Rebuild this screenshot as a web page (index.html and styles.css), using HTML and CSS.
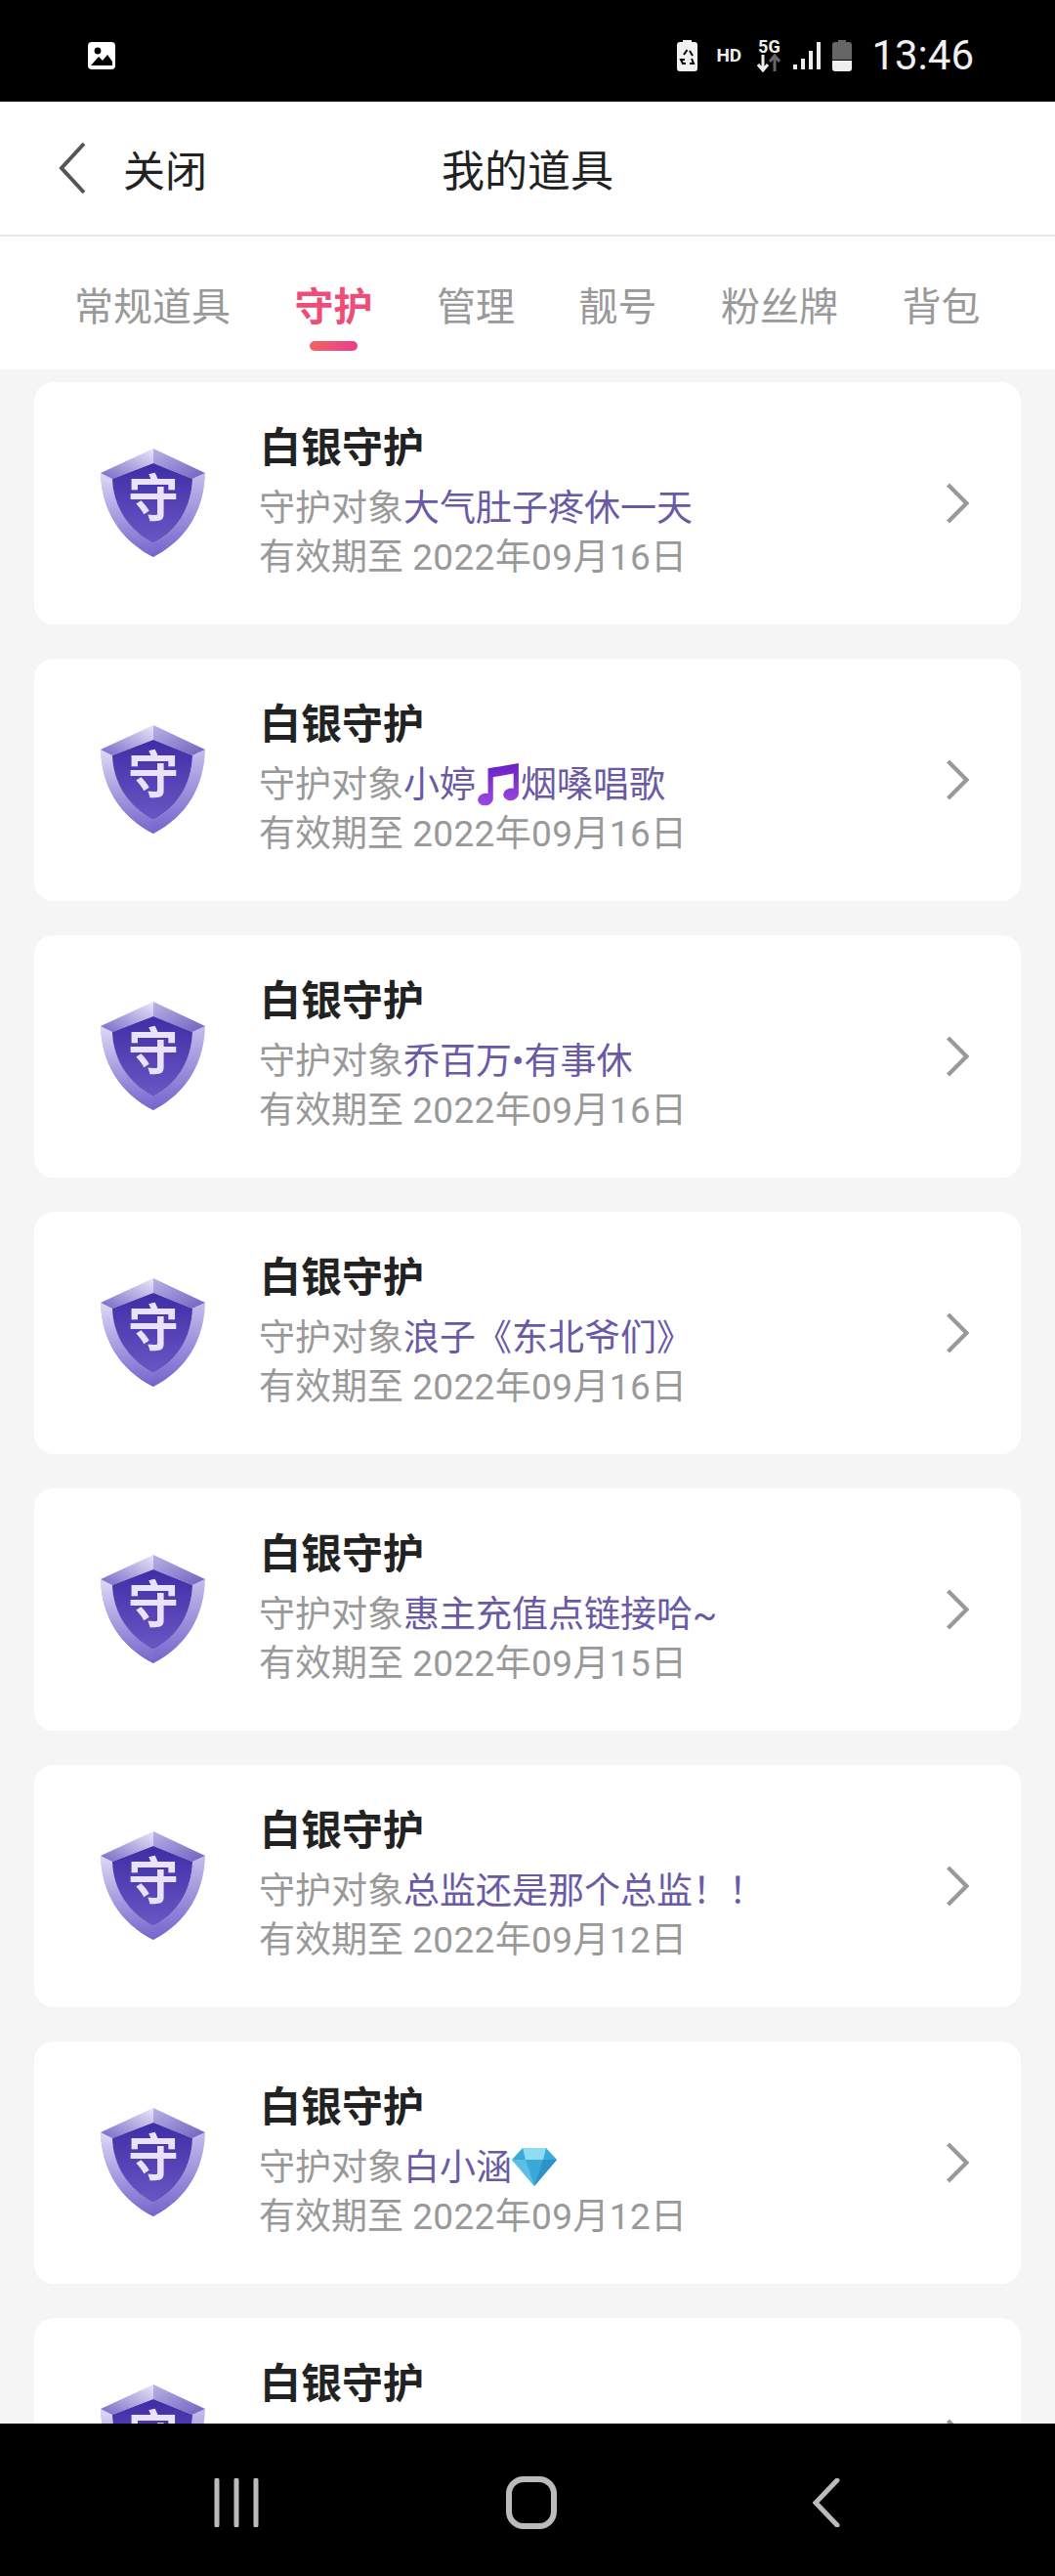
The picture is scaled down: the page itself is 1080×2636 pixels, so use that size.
FILE: index.html
```html
<!DOCTYPE html>
<html lang="zh-CN">
<head>
<meta charset="UTF-8" />
<meta name="viewport" content="width=device-width, initial-scale=1.0" />
<title>我的道具</title>
<link rel="stylesheet" href="styles.css">
</head>
<body>
<svg class="defs" width="0" height="0">
  <defs>
    <linearGradient id="gLeft" x1="0" y1="0" x2="0" y2="1"><stop offset="0" stop-color="#ded9f5"/><stop offset="1" stop-color="#7464cc"/></linearGradient>
    <linearGradient id="gRight" x1="0" y1="0" x2="0" y2="1"><stop offset="0" stop-color="#c4bdec"/><stop offset="1" stop-color="#7464cc"/></linearGradient>
    <linearGradient id="gTopL" x1="1" y1="0" x2="0" y2="1"><stop offset="0" stop-color="#e9e6f9"/><stop offset="1" stop-color="#7568c6"/></linearGradient>
    <linearGradient id="gTopR" x1="0" y1="0" x2="1" y2="1"><stop offset="0" stop-color="#b9b2e6"/><stop offset="1" stop-color="#6f61bf"/></linearGradient>
    <linearGradient id="gCore" x1="0" y1="0" x2="0" y2="1"><stop offset="0" stop-color="#3f2da6"/><stop offset="1" stop-color="#6a57c4"/></linearGradient>
    <symbol id="shield" viewBox="0 0 110 112">
      <path d="M1 25C2 62 20 93 55 111C90 93 107 62 108 25L95 31C94 60 80 84 55 97C30 84 14 60 13 31Z" fill="url(#gRight)"/>
      <path d="M1 25C2 62 20 93 55 111V97C30 84 14 60 13 31Z" fill="url(#gLeft)"/>
      <path d="M55 0L1 25L13 31L55 15Z" fill="url(#gTopL)"/>
      <path d="M55 0L108 25L95 31L55 15Z" fill="url(#gTopR)"/>
      <path d="M55 15L95 31C94 60 80 84 55 97C30 84 14 60 13 31Z" fill="url(#gCore)"/>
      <text x="55" y="70" class="shield-char">守</text>
    </symbol>
    <symbol id="arrow" viewBox="0 0 24 40">
      <path d="M3 2L21 20L3 38" fill="none" stroke="#999" stroke-width="4"/>
    </symbol>
  </defs>
</svg>

<div class="status-bar">
  <svg class="status-img" viewBox="0 0 28 28"><rect width="28" height="28" rx="4" fill="#fff"/><circle cx="10" cy="9" r="3.4" fill="#000"/><path d="M3 24L11 15L15 19L20 13L25 20V24Z" fill="#000"/></svg>
  <div class="status-right">
    <svg class="st-saver" viewBox="0 0 21 32"><path d="M6 0H15V2H18Q21 2 21 5V29Q21 32 18 32H3Q0 32 0 29V5Q0 2 3 2H6Z" fill="#f2f2f2"/><path d="M10.5 10L7 15M8 20H4L6 24H9M13 24H17L15 19M13 11L16 16" fill="none" stroke="#000" stroke-width="2"/></svg>
    <span class="st-hd">HD</span>
    <div class="st-net">
      <span class="st-5g">5G</span>
      <svg viewBox="0 0 24 19" width="24" height="19"><path d="M6 1V16M1 11L6 17L11 11" fill="none" stroke="#eee" stroke-width="3"/><path d="M18 18V3M13 8L18 2L23 8" fill="none" stroke="#666" stroke-width="3"/></svg>
    </div>
    <svg class="st-signal" viewBox="0 0 29 28"><rect x="0" y="23" width="4" height="5" fill="#eee"/><rect x="8" y="17" width="4" height="11" fill="#eee"/><rect x="16" y="9" width="4" height="19" fill="#eee"/><rect x="24" y="0" width="4" height="28" fill="#eee"/></svg>
    <svg class="st-batt" viewBox="0 0 20 32"><path d="M6 0H14V2H17Q20 2 20 5V20H0V5Q0 2 3 2H6Z" fill="#666"/><path d="M0 21H20V29Q20 32 17 32H3Q0 32 0 29Z" fill="#eee"/></svg>
    <span class="st-time">13:46</span>
  </div>
</div>

<div class="header">
  <svg class="back" viewBox="0 0 30 54"><path d="M27 2L4 27L27 52" fill="none" stroke="#555" stroke-width="4"/></svg>
  <span class="close">关闭</span>
  <span class="title">我的道具</span>
</div>

<div class="tabs">
  <div class="tab">常规道具</div>
  <div class="tab active">守护</div>
  <div class="tab">管理</div>
  <div class="tab">靓号</div>
  <div class="tab">粉丝牌</div>
  <div class="tab">背包</div>
</div>

<div class="list">
  <div class="card">
    <svg class="shield"><use href="#shield"/></svg>
    <div class="info">
      <div class="name">白银守护</div>
      <div class="line">守护对象<span class="who">大气肚子疼休一天</span></div>
      <div class="line">有效期至 <span class="date">2022年09月16日</span></div>
    </div>
    <svg class="arrow"><use href="#arrow"/></svg>
  </div>
  <div class="card">
    <svg class="shield"><use href="#shield"/></svg>
    <div class="info">
      <div class="name">白银守护</div>
      <div class="line">守护对象<span class="who">小婷<svg class="emoji" viewBox="0 0 44 44"><defs><linearGradient id="gNote" x1="0" y1="0" x2="0" y2="1"><stop offset="0" stop-color="#6a1fc4"/><stop offset="1" stop-color="#9a4be0"/></linearGradient></defs><path d="M12 7L42 2V32A7.5 6 -10 1 1 37 26.5V12L17 15.500V37A7.500 6 -10 1 1 12 31.500Z" fill="url(#gNote)"/></svg>烟嗓唱歌</span></div>
      <div class="line">有效期至 <span class="date">2022年09月16日</span></div>
    </div>
    <svg class="arrow"><use href="#arrow"/></svg>
  </div>
  <div class="card">
    <svg class="shield"><use href="#shield"/></svg>
    <div class="info">
      <div class="name">白银守护</div>
      <div class="line">守护对象<span class="who">乔百万•有事休</span></div>
      <div class="line">有效期至 <span class="date">2022年09月16日</span></div>
    </div>
    <svg class="arrow"><use href="#arrow"/></svg>
  </div>
  <div class="card">
    <svg class="shield"><use href="#shield"/></svg>
    <div class="info">
      <div class="name">白银守护</div>
      <div class="line">守护对象<span class="who">浪子《东北爷们》</span></div>
      <div class="line">有效期至 <span class="date">2022年09月16日</span></div>
    </div>
    <svg class="arrow"><use href="#arrow"/></svg>
  </div>
  <div class="card">
    <svg class="shield"><use href="#shield"/></svg>
    <div class="info">
      <div class="name">白银守护</div>
      <div class="line">守护对象<span class="who">惠主充值点链接哈~</span></div>
      <div class="line">有效期至 <span class="date">2022年09月15日</span></div>
    </div>
    <svg class="arrow"><use href="#arrow"/></svg>
  </div>
  <div class="card">
    <svg class="shield"><use href="#shield"/></svg>
    <div class="info">
      <div class="name">白银守护</div>
      <div class="line">守护对象<span class="who">总监还是那个总监！！</span></div>
      <div class="line">有效期至 <span class="date">2022年09月12日</span></div>
    </div>
    <svg class="arrow"><use href="#arrow"/></svg>
  </div>
  <div class="card">
    <svg class="shield"><use href="#shield"/></svg>
    <div class="info">
      <div class="name">白银守护</div>
      <div class="line">守护对象<span class="who">白小涵<svg class="emoji gem" viewBox="0 0 46 40"><path d="M11 1H35L46 13L23 40L0 13Z" fill="#3aa9d8"/><path d="M11 1H35L32 13H14Z" fill="#8fdcf5"/><path d="M0 13H14L23 40Z" fill="#5cc0e6"/><path d="M46 13H32L23 40Z" fill="#2b93c6"/></svg></span></div>
      <div class="line">有效期至 <span class="date">2022年09月12日</span></div>
    </div>
    <svg class="arrow"><use href="#arrow"/></svg>
  </div>
  <div class="card">
    <svg class="shield"><use href="#shield"/></svg>
    <div class="info">
      <div class="name">白银守护</div>
    </div>
    <svg class="arrow"><use href="#arrow"/></svg>
  </div>
</div>

<div class="nav-bar">
  <svg class="nav-recent" viewBox="0 0 46 50"><path d="M3 2V48M23 2V48M43 2V48" fill="none" stroke="#bbb" stroke-width="5" stroke-linecap="round"/></svg>
  <svg class="nav-home" viewBox="0 0 52 54"><rect x="3" y="3" width="46" height="48" rx="15" fill="none" stroke="#bbb" stroke-width="6"/></svg>
  <svg class="nav-back" viewBox="0 0 28 50"><path d="M25 2L3 25L25 48" fill="none" stroke="#bbb" stroke-width="5" stroke-linecap="round"/></svg>
</div>
</body>
</html>
```

FILE: styles.css
```css
html,body{margin:0;padding:0;}
body{width:1080px;height:2636px;overflow:hidden;display:flex;flex-direction:column;background:#f5f5f5;font-family:Roboto,"Noto Sans CJK SC",sans-serif;}
.defs{position:absolute;}

.status-bar{flex:none;height:104px;background:#000;display:flex;align-items:center;justify-content:space-between;padding:0 83px 0 90px;box-sizing:border-box;}
.status-img{width:28px;height:28px;margin-top:10px;}
.status-right{display:flex;align-items:center;height:100%;padding-top:9px;box-sizing:border-box;}
.st-saver{width:21px;height:32px;}
.st-hd{margin-left:19px;width:26px;font-size:19px;font-weight:700;color:#eee;line-height:1;}
.st-net{margin-left:16px;width:24px;display:flex;flex-direction:column;align-items:center;}
.st-5g{font-size:18px;font-weight:700;color:#eee;line-height:15px;}
.st-signal{margin-left:13px;width:29px;height:28px;}
.st-batt{margin-left:11px;width:20px;height:32px;}
.st-time{margin-left:20px;font-size:42px;color:#f0f0f0;line-height:1;}

.header{flex:none;height:138px;background:#fff;border-bottom:2px solid #e8e8e8;display:flex;align-items:center;position:relative;padding-left:59px;box-sizing:border-box;}
.back{width:30px;height:54px;}
.close{margin-left:37px;font-size:43px;color:#222;}
.title{position:absolute;left:0;right:0;text-align:center;font-size:44px;color:#222;}

.tabs{flex:none;height:136px;background:#fff;display:flex;gap:65.500px;padding:0 0 0 76px;box-sizing:border-box;align-items:center;}
.tab{font-size:40px;color:#999;position:relative;line-height:1;margin-top:9px;}
.tab.active{color:#ee4d78;font-weight:700;}
.tab.active::after{content:"";position:absolute;left:15px;right:16px;top:54px;height:10px;border-radius:5px;background:linear-gradient(90deg,#f0645f,#ee3b90);}

.list{flex:1;min-height:0;overflow:hidden;padding:13px 35px 0;display:flex;flex-direction:column;gap:35px;}
.card{flex:none;height:248px;background:#fff;border-radius:20px;display:flex;align-items:center;padding:0 52px 0 67px;box-sizing:border-box;}
.shield{flex:none;width:110px;height:112px;}
.shield-char{font-size:52px;font-weight:700;fill:#e9e2fa;text-anchor:middle;font-family:"Noto Sans CJK SC",sans-serif;}
.info{flex:1;height:162px;margin-left:53px;padding-top:1px;box-sizing:border-box;}
.name{font-size:42px;font-weight:700;color:#222;line-height:48px;margin:0 0 13px 1px;}
.line{font-size:37px;color:#999;line-height:50px;white-space:nowrap;}
.who{color:#6a5aa6;}
.date{letter-spacing:.35px;}
.emoji{width:46px;height:46px;vertical-align:-9px;}
.emoji.gem{width:46px;height:40px;vertical-align:-6px;}
.arrow{flex:none;width:26px;height:42px;}

.nav-bar{flex:none;height:156px;background:#000;display:flex;align-items:center;padding-top:6px;box-sizing:border-box;}
.nav-recent{width:46px;height:50px;margin-left:219px;}
.nav-home{width:52px;height:54px;margin-left:253px;}
.nav-back{width:28px;height:50px;margin-left:262px;}
```
